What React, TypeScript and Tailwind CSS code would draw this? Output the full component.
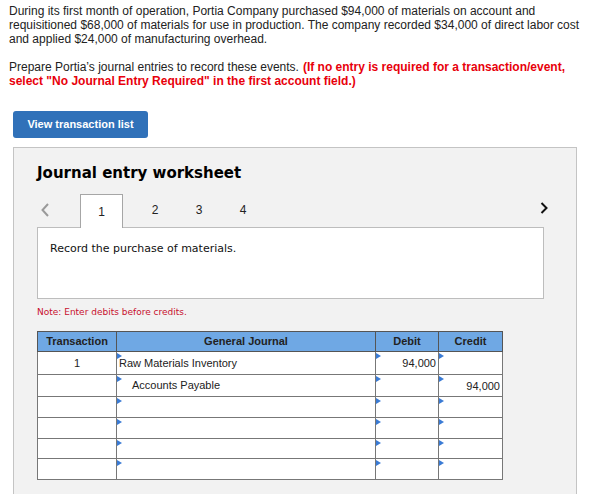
const Tri = () => (
  <span className="absolute left-0 top-[1px] w-0 h-0 border-y-[3.5px] border-y-transparent border-l-[5px] border-l-[#3a7bd5]" />
)

const rows = [
  { tr: '1', acct: 'Raw Materials Inventory', indent: false, debit: '94,000', credit: '', h: 'h-[23px]' },
  { tr: '', acct: 'Accounts Payable', indent: true, debit: '', credit: '94,000', h: 'h-[22px]' },
  { tr: '', acct: '', indent: false, debit: '', credit: '', h: 'h-[21px]' },
  { tr: '', acct: '', indent: false, debit: '', credit: '', h: 'h-[21px]' },
  { tr: '', acct: '', indent: false, debit: '', credit: '', h: 'h-[20px]' },
  { tr: '', acct: '', indent: false, debit: '', credit: '', h: 'h-[21px]' },
]

const App = () => {
  return (
    <div className="w-[589px] h-[494px] overflow-hidden bg-white font-['Liberation_Sans',Arial,sans-serif] text-[#222]">
      <div className="pl-[9px] pr-[5px] pt-[4px] text-[12px] leading-[14px]">
        <p>
          During its first month of operation, Portia Company purchased $94,000 of materials on account and
          requisitioned $68,000 of materials for use in production. The company recorded $34,000 of direct labor cost
          and applied $24,000 of manufacturing overhead.
        </p>
        <div className="mt-[14px]">
          <div className="flex gap-[4px]">
            <span>Prepare Portia’s journal entries to record these events.</span>
            <span className="font-bold text-[#e8000b]">(If no entry is required for a transaction/event,</span>
          </div>
          <div className="font-bold text-[#e8000b]">select "No Journal Entry Required" in the first account field.)</div>
        </div>
      </div>

      <div className="px-[13px]">
        <button className="mt-[23px] w-[135px] h-[27px] rounded-[3px] bg-[#3071b9] text-white text-[11px] font-bold">
          View transaction list
        </button>

        {/* worksheet panel */}
        <div className="mt-[9px] w-[564px] h-[400px] bg-[#f2f2f2] border border-[#c4c4c4] pl-[23px] pt-[16px]">
          <div className="font-['DejaVu_Sans',Verdana,sans-serif] font-bold text-[15px] leading-[18px] text-black">
            Journal entry worksheet
          </div>

          <div className="mt-[11px] w-[507px] flex items-end">
            <div className="w-[43px] h-[34px] flex items-center pl-[4px]">
              <svg width="8" height="14" viewBox="0 0 8 14">
                <path d="M7 1 L1.5 7 L7 13" fill="none" stroke="#9a9a9a" strokeWidth="2" />
              </svg>
            </div>
            <div className="relative z-10 w-[43px] h-[34px] -mb-[1px] bg-white border border-b-0 border-[#a6a6a6] flex justify-center pt-[8px] text-[12px]">
              1
            </div>
            <div className="ml-[10px] w-[44px] h-[34px] flex justify-center pt-[8px] text-[12px]">2</div>
            <div className="w-[44px] h-[34px] flex justify-center pt-[8px] text-[12px]">3</div>
            <div className="w-[44px] h-[34px] flex justify-center pt-[8px] text-[12px]">4</div>
            <div className="ml-auto -mr-[4px] h-[34px] flex items-center pb-[4px]">
              <svg width="8" height="12" viewBox="0 0 8 12">
                <path d="M1.5 1 L6.5 6 L1.5 11" fill="none" stroke="#111" strokeWidth="2" />
              </svg>
            </div>
          </div>

          <div className="w-[507px] h-[72px] bg-white border border-[#bdbdbd] pl-[12px] pt-[14px] font-['DejaVu_Sans',Verdana,sans-serif] text-[11px] leading-[14px] text-[#111]">
            Record the purchase of materials.
          </div>

          <div className="mt-[7px] font-['DejaVu_Sans',Verdana,sans-serif] text-[9px] leading-[12px] text-[#c8102e]">
            Note: Enter debits before credits.
          </div>

          <table className="mt-[13px] w-[465px] table-fixed border-collapse text-[11px]">
            <colgroup>
              <col className="w-[79px]" />
              <col className="w-[259px]" />
              <col className="w-[63px]" />
              <col className="w-[64px]" />
            </colgroup>
            <thead>
              <tr className="h-[20px] bg-[#6fa8e4] text-[#222] font-bold">
                <th className="border border-[#555] font-bold">Transaction</th>
                <th className="border border-[#555] font-bold">General Journal</th>
                <th className="border border-[#555] font-bold">Debit</th>
                <th className="border border-[#555] font-bold">Credit</th>
              </tr>
            </thead>
            <tbody className="bg-white">
              {rows.map((r, i) => (
                <tr key={i} className={r.h}>
                  <td className="border border-[#777] text-center align-middle p-0">{r.tr}</td>
                  <td className="relative border border-[#777] p-0 align-middle">
                    <Tri />
                    <span className={r.indent ? 'pl-[15px]' : 'pl-[2px]'}>{r.acct}</span>
                  </td>
                  <td className="relative border border-[#777] p-0 pr-[2px] text-right align-bottom pb-[3px]">
                    <Tri />
                    {r.debit}
                  </td>
                  <td className="relative border border-[#777] p-0 pr-[2px] text-right align-bottom pb-[2px]">
                    <Tri />
                    {r.credit}
                  </td>
                </tr>
              ))}
            </tbody>
          </table>
        </div>
      </div>
    </div>
  )
}

export default App
